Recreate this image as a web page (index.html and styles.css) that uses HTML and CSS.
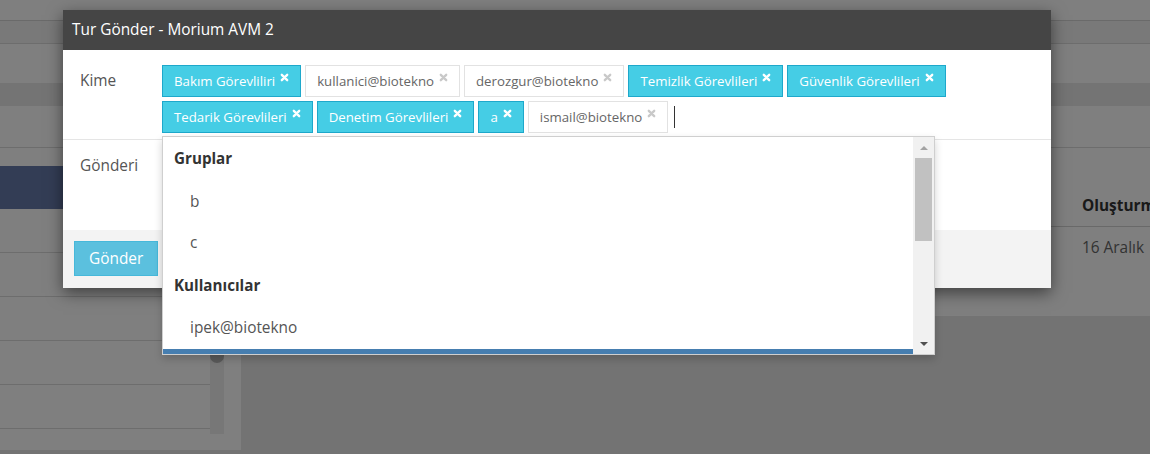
FILE: index.html
```html
<!DOCTYPE html>
<html lang="tr">
<head>
<meta charset="utf-8">
<title>Tur Gönder</title>
<link rel="stylesheet" href="styles.css">
</head>
<body>
<div class="page">
  <div class="topbar"></div>
  <div class="navbar"></div>
  <div class="toolbar"></div>
  <div class="subbar"></div>
  <div class="main">
    <aside class="sidebar">
      <div class="side-list">
        <div class="side-item"></div>
        <div class="side-gap"></div>
        <div class="side-active"></div>
        <div class="side-row"></div>
        <div class="side-row"></div>
        <div class="side-row"></div>
        <div class="side-row"></div>
        <div class="side-row"></div>
      </div>
      <div class="side-scroll"><span class="side-thumb"></span></div>
    </aside>
    <section class="content">
      <div class="content-head"></div>
      <div class="panel">
        <div class="trow thead"><span></span><span>Oluşturma Tarihi</span></div>
        <div class="trow"><span></span><span>16 Aralık</span></div>
      </div>
    </section>
  </div>
</div>

<div class="backdrop"></div>

<div class="modal">
  <div class="modal-header">Tur Gönder - Morium AVM 2</div>
  <div class="modal-body">
    <div class="form-row first">
      <label class="form-label">Kime</label>
      <div class="tag-field">
        <div class="tags">
          <span class="tag group">Bakım Görevliliri<svg class="x" viewBox="0 0 10 10"><path d="M2 2L8 8M8 2L2 8"/></svg></span>
          <span class="tag user">kullanici@biotekno<svg class="x" viewBox="0 0 10 10"><path d="M2 2L8 8M8 2L2 8"/></svg></span>
          <span class="tag user">derozgur@biotekno<svg class="x" viewBox="0 0 10 10"><path d="M2 2L8 8M8 2L2 8"/></svg></span>
          <span class="tag group">Temizlik Görevlileri<svg class="x" viewBox="0 0 10 10"><path d="M2 2L8 8M8 2L2 8"/></svg></span>
          <span class="tag group">Güvenlik Görevlileri<svg class="x" viewBox="0 0 10 10"><path d="M2 2L8 8M8 2L2 8"/></svg></span>
          <span class="tag group">Tedarik Görevlileri<svg class="x" viewBox="0 0 10 10"><path d="M2 2L8 8M8 2L2 8"/></svg></span>
          <span class="tag group">Denetim Görevlileri<svg class="x" viewBox="0 0 10 10"><path d="M2 2L8 8M8 2L2 8"/></svg></span>
          <span class="tag group">a<svg class="x" viewBox="0 0 10 10"><path d="M2 2L8 8M8 2L2 8"/></svg></span>
          <span class="tag user">ismail@biotekno<svg class="x" viewBox="0 0 10 10"><path d="M2 2L8 8M8 2L2 8"/></svg></span>
          <span class="caret"></span>
        </div>
        <div class="dropdown">
          <div class="dd-list">
            <div class="dd-group">Gruplar</div>
            <div class="dd-item">b</div>
            <div class="dd-item">c</div>
            <div class="dd-group">Kullanıcılar</div>
            <div class="dd-item">ipek@biotekno</div>
            <div class="dd-item active"></div>
          </div>
          <div class="dd-scroll">
            <span class="arrow up"></span>
            <span class="thumb"></span>
            <span class="track"></span>
            <span class="arrow down"></span>
          </div>
        </div>
      </div>
    </div>
    <div class="form-row second">
      <label class="form-label">Gönderi</label>
      <div class="field"></div>
    </div>
  </div>
  <div class="modal-footer">
    <button class="btn">Gönder</button>
  </div>
</div>
</body>
</html>
```

FILE: styles.css
```css
* { box-sizing: border-box; }
html, body { margin: 0; padding: 0; }
body {
  width: 1150px;
  height: 454px;
  overflow: hidden;
  position: relative;
  background: #e6e6e6;
  font-family: "Open Sans", "Liberation Sans", sans-serif;
}

/* underlying page */
.page { display: flex; flex-direction: column; height: 454px; }
.topbar { height: 21px; background: #fff; border-bottom: 1px solid #d4d4d4; flex: none; }
.navbar { height: 23px; background: #f3f3f3; border-bottom: 1px solid #dadada; flex: none; }
.toolbar { height: 39px; background: #fff; flex: none; }
.subbar { height: 23px; background: #e9e9e9; flex: none; }
.main { display: flex; flex: 1; align-items: flex-start; }

.sidebar { width: 241px; height: 344px; background: #fff; display: flex; flex: none; }
.side-list { width: 210px; display: flex; flex-direction: column; }
.side-item { height: 42px; border-bottom: 1px solid #dadada; }
.side-gap { height: 18px; }
.side-active { height: 43px; background: #667aaa; }
.side-row { height: 44px; border-bottom: 1px solid #dadada; }
.side-scroll { width: 14px; height: 225px; margin-top: 103px; background: #eeeeee; display: flex; flex-direction: column; }
.side-thumb { display: block; height: 28px; margin-top: 126px; background: #b4b4b4; border-radius: 7px; }

.content { flex: 1; display: flex; flex-direction: column; }
.content-head { height: 42px; background: #fff; border-bottom: 1px solid #dadada; }
.panel { height: 168px; background: #fff; padding-top: 48px; overflow: hidden; }
.trow { display: grid; grid-template-columns: 841px 1fr; font-size: 15.4px; line-height: 20px; white-space: nowrap; }
.thead { font-weight: 700; color: #333; padding-bottom: 10px; border-bottom: 1px solid #d2d2d2; }
.thead + .trow { padding-top: 11px; color: #666; }

.backdrop { position: absolute; inset: 0; background: rgba(0, 0, 0, 0.5); }

/* modal */
.modal {
  position: absolute;
  left: 63px;
  top: 10px;
  width: 988px;
  background: #fff;
  box-shadow: 0 5px 15px rgba(0, 0, 0, 0.5);
}
.modal-header {
  height: 40px;
  background: #454545;
  color: #fff;
  font-size: 15.4px;
  line-height: 40px;
  padding-left: 9px;
}
.form-row { display: flex; padding-left: 17px; border-bottom: 1px solid #e5e5e5; }
.form-row.first { padding-top: 15px; padding-bottom: 3px; }
.form-row.second { height: 90px; padding-top: 10px; border-bottom: 0; }
.form-label { width: 82px; flex: none; font-size: 15.4px; line-height: 32px; color: #555; }

.tag-field { flex: 1; position: relative; padding-right: 16px; padding-bottom: 3px; }
.tags { display: flex; flex-wrap: wrap; gap: 4px; align-items: center; }
.tag {
  display: inline-flex;
  align-items: center;
  height: 32px;
  padding: 0 11px;
  border: 1px solid;
  font-size: 13.25px;
  white-space: nowrap;
}
.tag.group { background: #45cde5; border-color: #1ea8cb; color: #fff; }
.tag.user { background: #fff; border-color: #e2e2e2; color: #666; }
.x {
  width: 9px;
  height: 9px;
  margin-left: 5px;
  margin-bottom: 7px;
  fill: none;
  stroke: currentColor;
  stroke-width: 2.6;
  stroke-linecap: round;
}
.tag.user .x { stroke: #c9c9c9; }
.caret { display: block; width: 1px; height: 22px; background: #333; margin-left: 2px; }

.dropdown {
  position: absolute;
  top: 100%;
  left: 0;
  width: 773px;
  height: 219px;
  background: #fff;
  border: 1px solid #cfcfcf;
  box-shadow: 0 4px 8px rgba(0, 0, 0, 0.18);
  display: flex;
  z-index: 2;
}
.dd-list { flex: 1; overflow: hidden; }
.dd-group { height: 43px; line-height: 43px; padding-left: 11px; font-size: 15.2px; font-weight: 700; color: #333; }
.dd-item { height: 42px; line-height: 42px; padding-left: 27px; font-size: 15.4px; color: #555; }
.dd-item:nth-child(2) { line-height: 44px; }
.dd-item.active { background: #467eb0; color: #fff; }
.dd-scroll { width: 21px; background: #f1f1f1; display: flex; flex-direction: column; align-items: center; }
.arrow { display: block; width: 0; height: 0; border-left: 4px solid transparent; border-right: 4px solid transparent; }
.arrow.up { border-bottom: 4px solid #a3a3a3; margin-top: 9px; margin-bottom: 8px; }
.arrow.down { border-top: 4px solid #505050; margin-bottom: 8px; }
.thumb { display: block; width: 17px; height: 83px; background: #c1c1c1; }
.track { flex: 1; }

.modal-footer { background: #f3f3f3; padding: 11px; height: 58px; }
.btn {
  display: block;
  height: 35px;
  padding: 0 14px;
  background: #5bc0de;
  border: 1px solid #46b8da;
  border-radius: 0;
  color: #fff;
  font-family: "Open Sans", "Liberation Sans", sans-serif;
  font-size: 15.4px;
  line-height: 33px;
}
```
